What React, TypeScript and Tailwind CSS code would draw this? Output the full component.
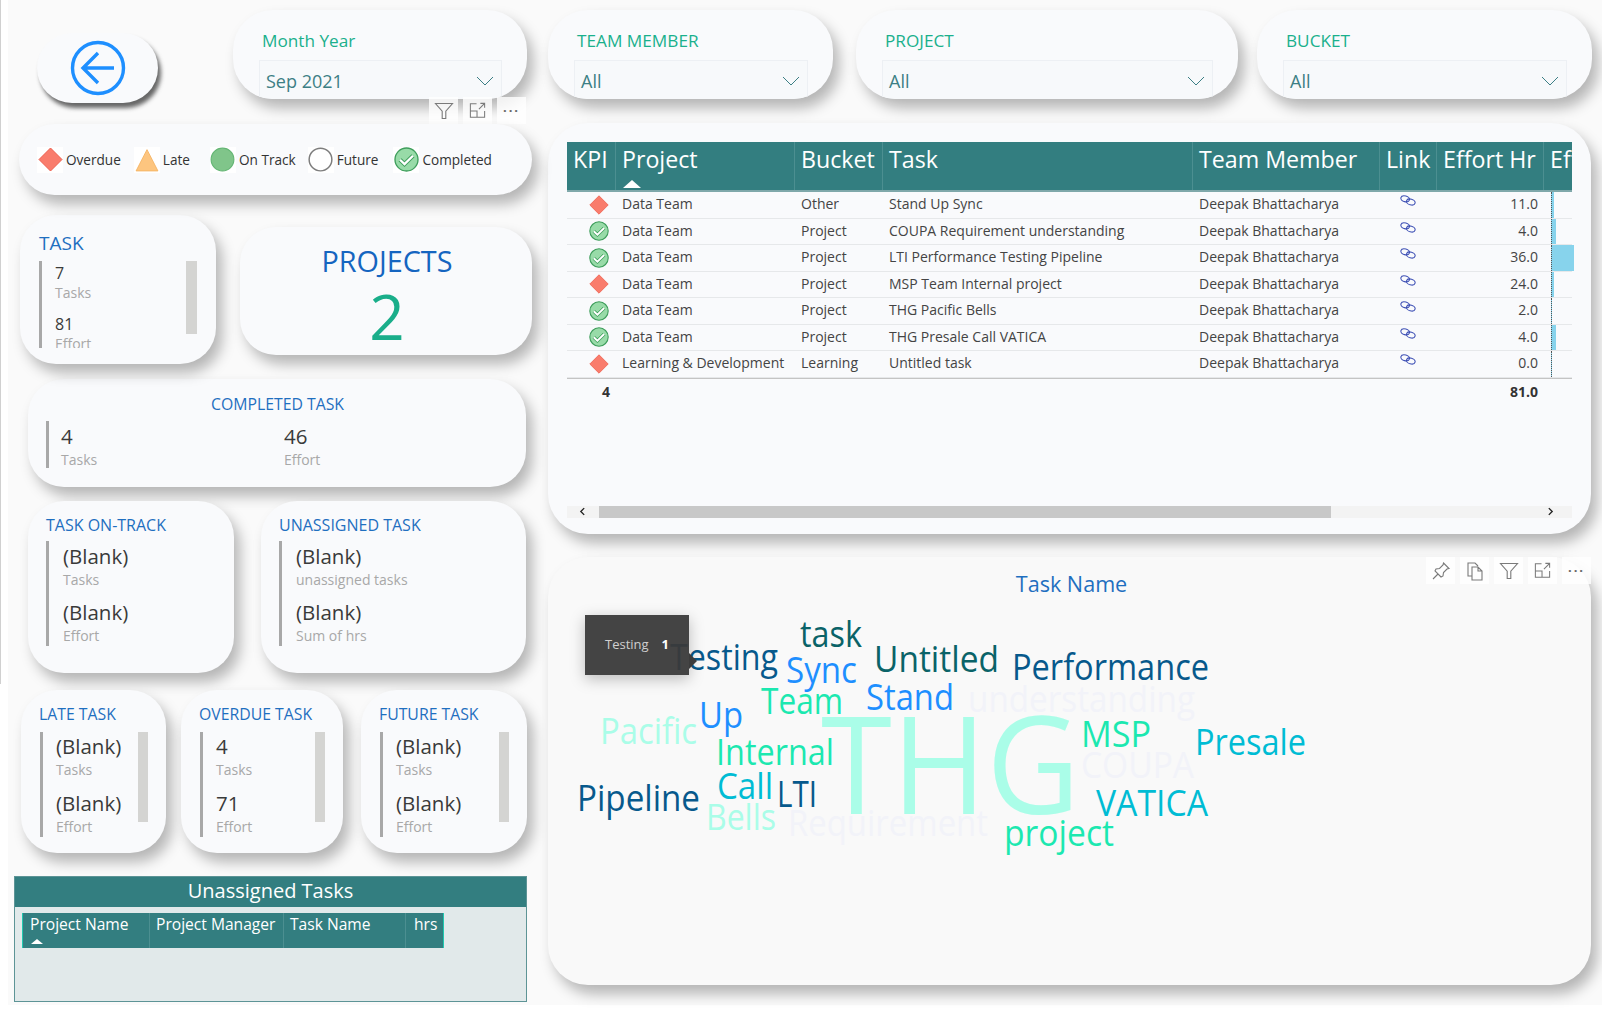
import type { ReactNode } from 'react';

const cardShadow = 'shadow-[6px_9px_14px_rgba(0,0,0,0.28)]';

function Funnel({ className }: { className?: string }) {
  return (
    <svg viewBox="0 0 20 20" className={className} fill="none" stroke="#7a7a7a" strokeWidth="1.1">
      <path d="M1.5 2.5h17l-6.7 7.6v7.4h-3.6v-7.4z" />
    </svg>
  );
}

function FocusIcon({ className }: { className?: string }) {
  return (
    <svg viewBox="0 0 20 20" className={className} fill="none" stroke="#7a7a7a" strokeWidth="1.1">
      <path d="M9 3H2.5v14h15v-6.5M2.5 10.500h7v6.500M11.500 8.500l6-6M13 2.500h4.500V7" />
    </svg>
  );
}

function HoverBox({ children }: { children: ReactNode }) {
  return <div className="flex h-[27px] w-[29px] items-center justify-center bg-white/80">{children}</div>;
}

function Dots() {
  return <span className="text-[13px] font-bold leading-none tracking-[2px] text-[#666]">···</span>;
}

function Chevron() {
  return (
    <svg viewBox="0 0 18 10" className="h-[10px] w-[18px]" fill="none" stroke="#3c7f85" strokeWidth="1">
      <path d="M1 1l8 8 8-8" />
    </svg>
  );
}

function Slicer({ title, value, className }: { title: string; value: string; className: string }) {
  return (
    <div className={`h-[89px] shrink-0 overflow-hidden rounded-[40px] bg-[#f9fafc] pl-[26px] pr-[25px] ${cardShadow} ${className}`}>
      <div className="pl-[3px] pt-[19px] text-[17.200px] leading-[24px] text-[#1ab08c]">{title}</div>
      <div className="mt-[7px] flex h-[50px] items-start justify-between border border-[#edf0f4] bg-[#f7f9fb] pl-[6px] pr-[7px] pt-[8px]">
        <span className="text-[18px] leading-[24px] text-[#3c7f85]">{value}</span>
        <span className="pt-[7px]"><Chevron /></span>
      </div>
    </div>
  );
}

function Diamond({ size = 20 }: { size?: number }) {
  return (
    <svg viewBox="0 0 20 20" style={{ width: size, height: size }}>
      <path d="M10 .8l9.200 9.200-9.200 9.200L.8 10z" fill="#f97c6c" stroke="#ee5f4e" strokeWidth="0.8" />
    </svg>
  );
}

function CheckCircle({ size = 20 }: { size?: number }) {
  return (
    <svg viewBox="0 0 20 20" style={{ width: size, height: size }}>
      <circle cx="10" cy="10" r="9.200" fill="#98dba8" stroke="#3f9e5c" strokeWidth="1.100" />
      <path d="M4.800 10.200l3.600 3.400 6.800-6.600" fill="none" stroke="#3f9e5c" strokeWidth="3.400" />
      <path d="M4.800 10.200l3.600 3.400 6.800-6.600" fill="none" stroke="#fff" strokeWidth="1.900" />
    </svg>
  );
}

function LegendItem({ icon, label, className }: { icon: ReactNode; label: string; className: string }) {
  return (
    <div className={`flex items-center ${className}`}>
      <div className="flex h-[26px] w-[26px] items-center justify-center bg-white">{icon}</div>
      <span className="ml-[3px] text-[13.600px] leading-[20px] text-[#333]">{label}</span>
    </div>
  );
}

function Metric({ value, label, size = 'large', className = '' }: { value: string; label: string; size?: 'small' | 'large'; className?: string }) {
  return (
    <div className={className}>
      <div className={size === 'large' ? 'text-[20.500px] leading-[30px] text-[#3a3a3a]' : 'text-[16px] leading-[22px] text-[#3a3a3a]'}>{value}</div>
      <div className="text-[14px] leading-[18px] text-[#a8a8a8]">{label}</div>
    </div>
  );
}

function StatCard({ title, label, top, bottom, bottomLabel = 'Effort', className }: { title: string; label?: string; top: string; bottom: string; bottomLabel?: string; className: string }) {
  return (
    <div className={`shrink-0 rounded-[36px] bg-[#f9fafc] ${cardShadow} ${className}`}>
      <div className="pl-[18px] pt-[12px] text-[16px] leading-[24px] text-[#1f6fc0]">{title}</div>
      <div className="ml-[18px] mt-[5px] h-[105px] border-l-[3px] border-[#a8a8a8] pl-[14px]">
        <Metric value={top} label={label ?? 'Tasks'} className="-mt-[1px]" />
        <Metric value={bottom} label={bottomLabel} className="pt-[8px]" />
      </div>
    </div>
  );
}

function SmallCard({ title, top, bottom, barRight, className }: { title: string; top: string; bottom: string; barRight: string; className: string }) {
  return (
    <div className={`h-[163px] shrink-0 rounded-[36px] bg-[#f9fafc] ${cardShadow} ${className}`}>
      <div className="pl-[18px] pt-[12px] text-[15.800px] leading-[24px] text-[#1f6fc0]">{title}</div>
      <div className="ml-[19px] mt-[6px] flex h-[105px] items-start justify-between border-l-[3px] border-[#a8a8a8] pl-[13px]">
        <div className="-mt-[1px]">
          <Metric value={top} label="Tasks" />
          <Metric value={bottom} label="Effort" className="pt-[9px]" />
        </div>
        <div className={`h-[90px] w-[10px] bg-[#d4d4d2] ${barRight}`} />
      </div>
    </div>
  );
}

type TaskRow = { status: 'overdue' | 'done'; project: string; bucket: string; task: string; effort: string; bar: number };

const rows: TaskRow[] = [
  { status: 'overdue', project: 'Data Team', bucket: 'Other', task: 'Stand Up Sync', effort: '11.0', bar: 3 },
  { status: 'done', project: 'Data Team', bucket: 'Project', task: 'COUPA Requirement understanding', effort: '4.0', bar: 5 },
  { status: 'done', project: 'Data Team', bucket: 'Project', task: 'LTI Performance Testing Pipeline', effort: '36.0', bar: 23 },
  { status: 'overdue', project: 'Data Team', bucket: 'Project', task: 'MSP Team Internal project', effort: '24.0', bar: 3 },
  { status: 'done', project: 'Data Team', bucket: 'Project', task: 'THG Pacific Bells', effort: '2.0', bar: 1 },
  { status: 'done', project: 'Data Team', bucket: 'Project', task: 'THG Presale Call VATICA', effort: '4.0', bar: 5 },
  { status: 'overdue', project: 'Learning & Development', bucket: 'Learning', task: 'Untitled task', effort: '0.0', bar: 0 },
];

const gridCols = 'grid grid-cols-[48px_179px_88px_310px_187px_57px_107px_29px]';

const headers = ['KPI', 'Project', 'Bucket', 'Task', 'Team Member', 'Link', 'Effort Hr', 'Effort'];

function LinkIcon() {
  return (
    <svg viewBox="0 0 16 11" className="h-[11px] w-[16px]" fill="none" stroke="#3f51b5" strokeWidth="1.100">
      <ellipse cx="5.200" cy="3.800" rx="4.400" ry="2.900" transform="rotate(14 5.200 3.800)" />
      <ellipse cx="10.800" cy="7" rx="4.400" ry="2.900" transform="rotate(14 10.800 7)" />
    </svg>
  );
}

type Word = { text: string; x: number; y: number; w: number; size: number; color: string };

const NAVY = '#07598c';
const TEAL = '#0a6368';
const BLUE = '#1e8fff';
const MINT = '#1ce8b0';
const PALE = '#aafde8';
const CYAN = '#00bcd4';
const GHOST = '#f2f3f9';

const words: Word[] = [
  { text: 'understanding', x: 969, y: 712, w: 227, size: 36, color: GHOST },
  { text: 'COUPA', x: 1082, y: 778, w: 113, size: 36, color: GHOST },
  { text: 'Requirement', x: 789, y: 836, w: 200, size: 36, color: GHOST },
  { text: 'THG', x: 822, y: 814, w: 259, size: 136, color: PALE },
  { text: 'Testing', x: 671, y: 670, w: 108, size: 36, color: NAVY },
  { text: 'task', x: 801, y: 647, w: 62, size: 36, color: TEAL },
  { text: 'Untitled', x: 875, y: 672, w: 125, size: 36, color: TEAL },
  { text: 'Performance', x: 1013, y: 680, w: 197, size: 36, color: NAVY },
  { text: 'Sync', x: 787, y: 683, w: 71, size: 36, color: BLUE },
  { text: 'Team', x: 762, y: 714, w: 82, size: 36, color: MINT },
  { text: 'Stand', x: 867, y: 710, w: 88, size: 36, color: BLUE },
  { text: 'Up', x: 700, y: 728, w: 44, size: 36, color: BLUE },
  { text: 'Pacific', x: 601, y: 744, w: 97, size: 36, color: PALE },
  { text: 'Internal', x: 717, y: 765, w: 118, size: 36, color: MINT },
  { text: 'MSP', x: 1082, y: 747, w: 70, size: 36, color: MINT },
  { text: 'Presale', x: 1196, y: 755, w: 111, size: 36, color: CYAN },
  { text: 'Pipeline', x: 578, y: 811, w: 123, size: 36, color: NAVY },
  { text: 'Call', x: 718, y: 799, w: 56, size: 36, color: CYAN },
  { text: 'LTI', x: 778, y: 807, w: 40, size: 36, color: NAVY },
  { text: 'Bells', x: 707, y: 830, w: 70, size: 36, color: PALE },
  { text: 'VATICA', x: 1097, y: 816, w: 112, size: 36, color: CYAN },
  { text: 'project', x: 1005, y: 846, w: 110, size: 36, color: MINT },
];

export default function App() {
  return (
    <div className="relative h-[1020px] w-[1602px] overflow-hidden bg-white font-['Open_Sans',sans-serif]">
      <div className="absolute left-0 top-0 h-[684px] w-[1px] bg-[#d0d0d0]" />
      <div className="ml-[8px] flex h-[1005px] bg-[#fafafa]">
        {/* left column */}
        <div className="w-[532px] shrink-0">
          <div className="relative flex h-[124px] items-start pt-[10px]">
            <div className="ml-[29px] mt-[23px] flex h-[70px] w-[121px] shrink-0 items-center justify-center rounded-[35px] bg-[#f9fafc] shadow-[3px_5px_4px_rgba(40,40,40,0.7)]">
              <svg viewBox="0 0 56 56" className="h-[56px] w-[56px]" fill="none" stroke="#1e8fff" strokeWidth="3.400">
                <circle cx="28" cy="28" r="25.500" />
                <path d="M44 28H13M28 13L13 28l15 15" />
              </svg>
            </div>
            <Slicer title="Month Year" value="Sep 2021" className="ml-[75px] w-[294px]" />
            <div className="absolute left-[421px] top-[97px] flex gap-[5px]">
              <HoverBox><Funnel className="h-[20px] w-[20px]" /></HoverBox>
              <HoverBox><FocusIcon className="h-[19px] w-[19px]" /></HoverBox>
              <HoverBox><Dots /></HoverBox>
            </div>
          </div>

          <div className={`relative ml-[11px] flex h-[71px] w-[513px] items-center rounded-[36px] bg-[#f9fafc] ${cardShadow}`}>
            <LegendItem className="ml-[18px]" icon={<Diamond size={25} />} label="Overdue" />
            <LegendItem className="ml-[13px]" icon={<svg viewBox="0 0 22 22" className="h-[24px] w-[24px]"><path d="M11 1.500L21 21H1z" fill="#fdc57f" stroke="#f5b25f" strokeWidth="0.800" /></svg>} label="Late" />
            <LegendItem className="ml-[20px]" icon={<svg viewBox="0 0 22 22" className="h-[25px] w-[25px]"><circle cx="11" cy="11" r="10" fill="#80c58a" stroke="#63b573" strokeWidth="1" /></svg>} label="On Track" />
            <LegendItem className="ml-[12px]" icon={<svg viewBox="0 0 22 22" className="h-[25px] w-[25px]"><circle cx="11" cy="11" r="10" fill="#fff" stroke="#7d7d7d" strokeWidth="1.300" /></svg>} label="Future" />
            <LegendItem className="ml-[15px]" icon={<CheckCircle size={25} />} label="Completed" />
          </div>

          <div className="mt-[20px] flex h-[149px] items-start">
            <div className={`ml-[12px] h-[149px] w-[196px] shrink-0 rounded-[36px] bg-[#f9fafc] ${cardShadow}`}>
              <div className="pl-[19px] pt-[15px] text-[19px] leading-[26px] text-[#1f6fc0]">TASK</div>
              <div className="ml-[19px] mt-[5px] flex h-[87px] justify-between overflow-hidden border-l-[3px] border-[#a8a8a8] pl-[13px] pr-[19px]">
                <div className="pt-[1px]">
                  <Metric size="small" value="7" label="Tasks" />
                  <Metric size="small" value="81" label="Effort" className="pt-[11px]" />
                </div>
                <div className="h-[73px] w-[11px] bg-[#d4d4d2]" />
              </div>
            </div>
            <div className={`ml-[24px] mt-[12px] flex h-[128px] w-[292px] shrink-0 flex-col items-center rounded-[36px] bg-[#f9fafc] pl-[2px] ${cardShadow}`}>
              <div className="pt-[14px] text-[28.800px] leading-[40px] text-[#1565c0]">PROJECTS</div>
              <div className="text-[62px] leading-[70px] text-[#1aae8a]">2</div>
            </div>
          </div>

          <div className={`ml-[20px] mt-[15px] h-[108px] w-[498px] rounded-[36px] bg-[#f9fafc] ${cardShadow}`}>
            <div className="pl-[1px] pt-[13px] text-center text-[15.800px] leading-[24px] text-[#1f6fc0]">COMPLETED TASK</div>
            <div className="ml-[18px] mt-[5px] flex h-[47px] border-l-[3px] border-[#a8a8a8] pl-[12px]">
              <Metric value="4" label="Tasks" className="w-[223px] shrink-0" />
              <Metric value="46" label="Effort" />
            </div>
          </div>

          <div className="mt-[14px] flex">
            <StatCard title="TASK ON-TRACK" top="(Blank)" bottom="(Blank)" className="ml-[20px] h-[172px] w-[206px]" />
            <StatCard title="UNASSIGNED TASK" label="unassigned tasks" top="(Blank)" bottom="(Blank)" bottomLabel="Sum of hrs" className="ml-[27px] h-[172px] w-[265px]" />
          </div>

          <div className="mt-[17px] flex">
            <SmallCard title="LATE TASK" top="(Blank)" bottom="(Blank)" barRight="mr-[18px]" className="ml-[13px] w-[145px]" />
            <SmallCard title="OVERDUE TASK" top="4" bottom="71" barRight="mr-[18px]" className="ml-[15px] w-[162px]" />
            <SmallCard title="FUTURE TASK" top="(Blank)" bottom="(Blank)" barRight="mr-[18px]" className="ml-[18px] w-[166px]" />
          </div>

          <div className="ml-[6px] mt-[23px] h-[126px] w-[513px] border border-[#5d9496] bg-[#e1e9ea]">
            <div className="h-[30px] bg-[#337e80] text-center text-[20px] leading-[28px] text-white">Unassigned Tasks</div>
            <div className="ml-[7px] mt-[6px] grid h-[35px] w-[422px] grid-cols-[126px_134px_122px_40px] whitespace-nowrap border-x border-[#1fc9b0] bg-[#337e80] text-[15.600px] leading-[22px] text-white">
              <div className="relative pl-[7px]">
                Project Name
                <span className="absolute bottom-[4px] left-[8px] h-0 w-0 border-x-[6px] border-b-[5px] border-x-transparent border-b-white" />
              </div>
              <div className="border-l border-[#4c8f91] pl-[6px]">Project Manager</div>
              <div className="border-l border-[#4c8f91] pl-[6px]">Task Name</div>
              <div className="border-l border-[#4c8f91] pl-[8px]">hrs</div>
            </div>
          </div>
        </div>

        {/* right column */}
        <div className="w-[1062px] shrink-0 pt-[10px]">
          <div className="flex">
            <Slicer title="TEAM MEMBER" value="All" className="ml-[8px] w-[285px]" />
            <Slicer title="PROJECT" value="All" className="ml-[23px] w-[382px]" />
            <Slicer title="BUCKET" value="All" className="ml-[19px] w-[335px]" />
          </div>

          <div className={`ml-[8px] mt-[24px] h-[411px] w-[1043px] overflow-hidden rounded-[40px] bg-[#f9fafc] pl-[19px] pt-[19px] ${cardShadow}`}>
            <div className={`${gridCols} h-[50px] w-[1005px] overflow-hidden border-b-2 border-[#7fa8aa] bg-[#337e80] text-[23.200px] leading-[34px] text-white`}>
              {headers.map((h, i) => (
                <div key={h} className={`relative overflow-hidden whitespace-nowrap pl-[6px] ${i > 0 ? 'border-l border-[#4c8f91]' : ''}`}>
                  {h}
                  {h === 'Project' && <span className="absolute bottom-[2px] left-[7px] h-0 w-0 border-x-[9px] border-b-[8px] border-x-transparent border-b-white" />}
                </div>
              ))}
            </div>
            {rows.map((r) => (
              <div key={r.task} className={`${gridCols} h-[26.500px] w-[1005px] border-b border-[#e6e8ea] text-[14px] leading-[24px] text-[#444]`}>
                <div className="flex items-center pl-[22px]">
                  {r.status === 'overdue' ? <Diamond size={20} /> : <CheckCircle size={20} />}
                </div>
                <div className="whitespace-nowrap pl-[7px]">{r.project}</div>
                <div className="pl-[7px]">{r.bucket}</div>
                <div className="whitespace-nowrap pl-[7px]">{r.task}</div>
                <div className="whitespace-nowrap pl-[7px]">Deepak Bhattacharya</div>
                <div className="flex justify-center pt-[3px]"><LinkIcon /></div>
                <div className="pr-[5px] text-right">{r.effort}</div>
                <div className="pl-[8px]">
                  <div className="h-full border-l border-dotted border-[#555] bg-[#87d3ec]" style={{ width: r.bar }} />
                </div>
              </div>
            ))}
            <div className={`${gridCols} w-[1005px] border-t border-[#c4c4c4] text-[14px] font-bold leading-[26px] text-[#333]`}>
              <div className="pl-[35px]">4</div>
              <div className="col-span-5" />
              <div className="pr-[5px] text-right">81.0</div>
            </div>
            <div className="mt-[101px] flex h-[12px] w-[1005px] items-center bg-[#f3f3f3] text-[#333]">
              <svg viewBox="0 0 8 8" className="ml-[11px] h-[9px] w-[9px]" fill="none" stroke="#222" strokeWidth="1.200"><path d="M5.500 1L2.500 4l3 3" /></svg>
              <div className="ml-[12px] h-[12px] w-[732px] bg-[#c8c8c8]" />
              <svg viewBox="0 0 8 8" className="ml-[215px] h-[9px] w-[9px]" fill="none" stroke="#222" strokeWidth="1.200"><path d="M2.500 1l3 3-3 3" /></svg>
            </div>
          </div>

          <div className={`relative ml-[8px] mt-[23px] h-[428px] w-[1043px] rounded-[40px] bg-[#f9f9f9] ${cardShadow}`}>
            <div className="pl-[4px] pt-[12px] text-center text-[21.600px] leading-[30px] text-[#1f6fc0]">Task Name</div>
            {/* word cloud, in page coordinates */}
            <svg viewBox="549 557 1043 428" className="absolute inset-0 h-full w-full" fontFamily="'Open Sans', sans-serif">
              {words.map((w) => (
                <text key={w.text} x={w.x} y={w.y} fontSize={w.size} fill={w.color} textLength={w.w} lengthAdjust="spacingAndGlyphs">
                  {w.text}
                </text>
              ))}
            </svg>
            <div className="absolute left-[37px] top-[58px] flex h-[60px] w-[104px] items-center bg-[#3a3a3a]/95 pl-[20px] text-[13px] text-[#cfcfcf] shadow-[0_4px_14px_rgba(0,0,0,0.25)]">
              Testing
              <span className="ml-[13px] font-bold text-white">1</span>
              <span className="absolute left-[104px] top-[38px] h-0 w-0 border-y-[8px] border-l-[8px] border-y-transparent border-l-[#3c3c3c]" />
            </div>
            <div className="absolute right-0 top-0 flex gap-[5px]">
              <HoverBox>
                <svg viewBox="0 0 20 20" className="h-[20px] w-[20px]" fill="none" stroke="#7a7a7a" strokeWidth="1.100">
                  <path d="M12.500 2l5.500 5.500-2 .5-3.500 3.500-.5 3.500-2 1-6-6 1-2 3.500-.5L12 4zM7 13l-5 5" />
                </svg>
              </HoverBox>
              <HoverBox>
                <svg viewBox="0 0 20 20" className="h-[20px] w-[20px]" fill="none" stroke="#7a7a7a" strokeWidth="1.100">
                  <path d="M7 15H3V2h7l3 3M7 6h6l4 4v9H7zM13 6v4h4" />
                </svg>
              </HoverBox>
              <HoverBox><Funnel className="h-[20px] w-[20px]" /></HoverBox>
              <HoverBox><FocusIcon className="h-[19px] w-[19px]" /></HoverBox>
              <HoverBox><Dots /></HoverBox>
            </div>
          </div>
        </div>
      </div>
    </div>
  );
}
